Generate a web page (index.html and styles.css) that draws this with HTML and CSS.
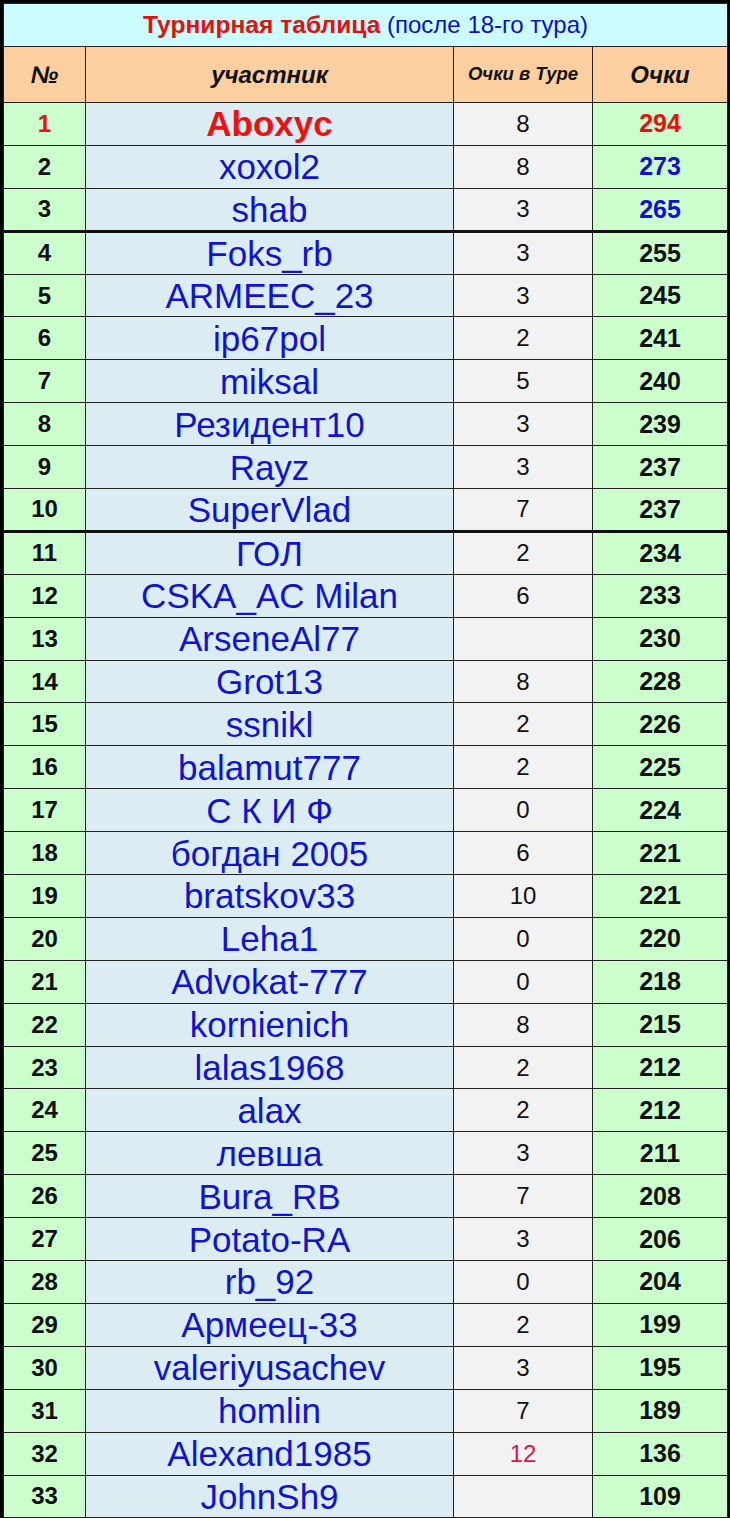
FILE: index.html
```html
<!DOCTYPE html>
<html lang="ru">
<head>
<meta charset="utf-8">
<title>Турнирная таблица</title>
<link rel="stylesheet" href="styles.css">
</head>
<body>
<div class="frame">
<table class="standings">
  <colgroup>
    <col class="c-no"><col class="c-name"><col class="c-tour"><col class="c-pts">
  </colgroup>
  <thead>
    <tr class="title-row">
      <th colspan="4"><span class="t-red">Турнирная таблица</span> <span class="t-blue">(после 18-го тура)</span></th>
    </tr>
    <tr class="head-row">
      <th class="h-no">№</th>
      <th class="h-name">участник</th>
      <th class="h-tour">Очки в Туре</th>
      <th class="h-pts">Очки</th>
    </tr>
  </thead>
  <tbody>
    <tr><td class="no red">1</td><td class="name leader">Aboxyc</td><td class="tour">8</td><td class="pts red">294</td></tr>
    <tr><td class="no">2</td><td class="name">xoxol2</td><td class="tour">8</td><td class="pts blue">273</td></tr>
    <tr class="sep"><td class="no">3</td><td class="name">shab</td><td class="tour">3</td><td class="pts blue">265</td></tr>
    <tr><td class="no">4</td><td class="name">Foks_rb</td><td class="tour">3</td><td class="pts">255</td></tr>
    <tr><td class="no">5</td><td class="name">ARMEEC_23</td><td class="tour">3</td><td class="pts">245</td></tr>
    <tr><td class="no">6</td><td class="name">ip67pol</td><td class="tour">2</td><td class="pts">241</td></tr>
    <tr><td class="no">7</td><td class="name">miksal</td><td class="tour">5</td><td class="pts">240</td></tr>
    <tr><td class="no">8</td><td class="name">Резидент10</td><td class="tour">3</td><td class="pts">239</td></tr>
    <tr><td class="no">9</td><td class="name">Rayz</td><td class="tour">3</td><td class="pts">237</td></tr>
    <tr class="sep"><td class="no">10</td><td class="name">SuperVlad</td><td class="tour">7</td><td class="pts">237</td></tr>
    <tr><td class="no">11</td><td class="name">ГОЛ</td><td class="tour">2</td><td class="pts">234</td></tr>
    <tr><td class="no">12</td><td class="name">CSKA_AC Milan</td><td class="tour">6</td><td class="pts">233</td></tr>
    <tr><td class="no">13</td><td class="name">ArseneAl77</td><td class="tour"></td><td class="pts">230</td></tr>
    <tr><td class="no">14</td><td class="name">Grot13</td><td class="tour">8</td><td class="pts">228</td></tr>
    <tr><td class="no">15</td><td class="name">ssnikl</td><td class="tour">2</td><td class="pts">226</td></tr>
    <tr><td class="no">16</td><td class="name">balamut777</td><td class="tour">2</td><td class="pts">225</td></tr>
    <tr><td class="no">17</td><td class="name">С К И Ф</td><td class="tour">0</td><td class="pts">224</td></tr>
    <tr><td class="no">18</td><td class="name">богдан 2005</td><td class="tour">6</td><td class="pts">221</td></tr>
    <tr><td class="no">19</td><td class="name">bratskov33</td><td class="tour">10</td><td class="pts">221</td></tr>
    <tr><td class="no">20</td><td class="name">Leha1</td><td class="tour">0</td><td class="pts">220</td></tr>
    <tr><td class="no">21</td><td class="name">Advokat-777</td><td class="tour">0</td><td class="pts">218</td></tr>
    <tr><td class="no">22</td><td class="name">kornienich</td><td class="tour">8</td><td class="pts">215</td></tr>
    <tr><td class="no">23</td><td class="name">lalas1968</td><td class="tour">2</td><td class="pts">212</td></tr>
    <tr><td class="no">24</td><td class="name">alax</td><td class="tour">2</td><td class="pts">212</td></tr>
    <tr><td class="no">25</td><td class="name">левша</td><td class="tour">3</td><td class="pts">211</td></tr>
    <tr><td class="no">26</td><td class="name">Bura_RB</td><td class="tour">7</td><td class="pts">208</td></tr>
    <tr><td class="no">27</td><td class="name">Potato-RA</td><td class="tour">3</td><td class="pts">206</td></tr>
    <tr><td class="no">28</td><td class="name">rb_92</td><td class="tour">0</td><td class="pts">204</td></tr>
    <tr><td class="no">29</td><td class="name">Армеец-33</td><td class="tour">2</td><td class="pts">199</td></tr>
    <tr><td class="no">30</td><td class="name">valeriyusachev</td><td class="tour">3</td><td class="pts">195</td></tr>
    <tr><td class="no">31</td><td class="name">homlin</td><td class="tour">7</td><td class="pts">189</td></tr>
    <tr><td class="no">32</td><td class="name">Alexand1985</td><td class="tour pink">12</td><td class="pts">136</td></tr>
    <tr><td class="no">33</td><td class="name">JohnSh9</td><td class="tour"></td><td class="pts">109</td></tr>
  </tbody>
</table>
</div>
</body>
</html>
```
FILE: styles.css
```css
html, body {
  margin: 0;
  padding: 0;
  background: #000;
}

.frame {
  width: 730px;
  height: 1518px;
  box-sizing: border-box;
  padding: 3px 3px 3px 3px;
  background: #000;
  overflow: hidden;
}

.standings {
  width: 724px;
  border-collapse: collapse;
  table-layout: fixed;
  font-family: "Liberation Sans", Arial, sans-serif;
  color: #111;
}

.c-no { width: 82px; }
.c-name { width: 368px; }
.c-tour { width: 139px; }
.c-pts { width: 135px; }

.standings th,
.standings td {
  border: 1px solid #222;
  padding: 0;
  text-align: center;
  vertical-align: middle;
  line-height: 1;
  white-space: nowrap;
}

.title-row th {
  height: 42px;
  background: #cdfcff;
  font-size: 24px;
  font-weight: normal;
}

.t-red {
  color: #e41010;
  font-weight: bold;
  font-size: 24.6px;
}

.t-blue {
  color: #0a10c8;
}

.head-row th {
  height: 55px;
  background: #fccfa0;
  font-style: italic;
  font-weight: bold;
  font-size: 24px;
  color: #111;
}

.head-row .h-tour {
  font-size: 18.5px;
}

.standings tbody tr {
  height: 42.9px;
}

.standings tbody tr.sep td {
  border-bottom: 3px solid #111;
}

.no {
  background: #ccfdcc;
  font-weight: bold;
  font-size: 24px;
}

.name {
  background: #dbedf3;
  color: #1014d0;
  font-size: 35px;
}

.name.leader {
  color: #ee1111;
  font-weight: bold;
  font-size: 35px;
}

.tour {
  background: #f2f2f2;
  font-size: 24px;
}

.pts {
  background: #ccfdcc;
  font-weight: bold;
  font-size: 25px;
}

.red { color: #e81010; }
.blue { color: #1010d8; }
.pink { color: #e0124e; }
```
